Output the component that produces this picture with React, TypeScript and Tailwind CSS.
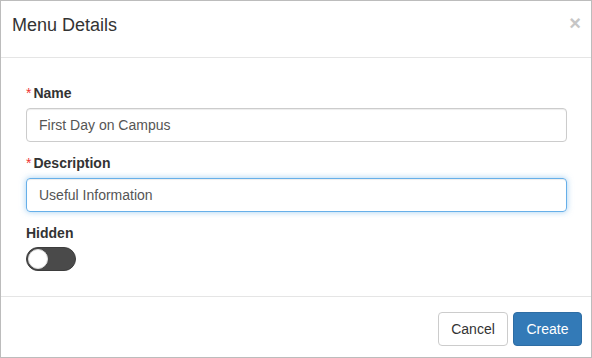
export default function App() {
  return (
    <div className="w-[592px] h-[358px] bg-white border border-[#bcbcbc] flex flex-col text-[#333] font-['Liberation_Sans',Arial,sans-serif]">
      {/* header */}
      <div className="h-[57px] border-b border-[#e5e5e5] flex items-start justify-between pl-[11px] pr-[10px] pt-[14px]">
        <h4 className="text-[18px] leading-[20px] text-[#333]">Menu Details</h4>
        <button className="text-[20px] leading-[16px] font-bold text-[#c6c6c6] mt-[0px]">×</button>
      </div>

      {/* body */}
      <div className="h-[239px] border-b border-[#e5e5e5] pt-[25px] pl-[25px] pr-[24px] text-[14px]">
        <div className="mb-[11px]">
          <label className="block leading-[20px] mb-[5px] font-bold">
            <span className="text-[#e33] font-normal mr-[2px]">*</span>Name
          </label>
          <input
            className="block w-full h-[34px] px-[12px] border border-[#ccc] rounded-[4px] text-[#555] outline-none shadow-[inset_0_1px_1px_rgba(0,0,0,0.075)]"
            defaultValue="First Day on Campus"
          />
        </div>
        <div className="mb-[11px]">
          <label className="block leading-[20px] mb-[5px] font-bold">
            <span className="text-[#e33] font-normal mr-[2px]">*</span>Description
          </label>
          <input
            className="block w-full h-[34px] px-[12px] border border-[#66afe9] rounded-[4px] text-[#555] outline-none shadow-[inset_0_1px_1px_rgba(0,0,0,0.075),0_0_6px_rgba(102,175,233,0.6)]"
            defaultValue="Useful Information"
          />
        </div>
        <div>
          <label className="block leading-[20px] mb-[4px] font-bold">Hidden</label>
          <div className="w-[50px] h-[24px] rounded-full bg-[#4a4a4a] border border-[#3d3d3d] flex items-center px-[1px]">
            <div className="w-[20px] h-[20px] rounded-full bg-white border border-[#ddd]" />
          </div>
        </div>
      </div>

      {/* footer */}
      <div className="flex-1 flex justify-end items-start gap-[5px] pt-[15px] pr-[9px]">
        <button className="h-[34px] w-[70px] rounded-[4px] border border-[#ccc] bg-white text-[14px] text-[#333]">
          Cancel
        </button>
        <button className="h-[34px] w-[69px] rounded-[4px] border border-[#2e6da4] bg-[#337ab7] text-[14px] text-white">
          Create
        </button>
      </div>
    </div>
  )
}
